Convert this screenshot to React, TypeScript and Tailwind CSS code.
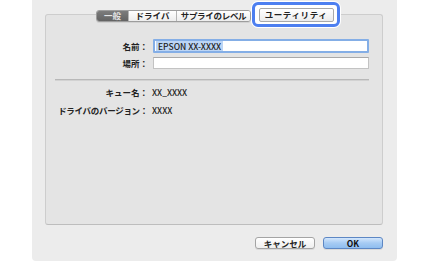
import React from 'react';

const font = { fontFamily: '"Noto Sans CJK JP", "Noto Sans", sans-serif' };

const App: React.FC = () => {
  return (
    <div className="w-[430px] h-[262px] bg-white overflow-hidden" style={font}>
      {/* ウィンドウ */}
      <div className="ml-[32px] w-[365px] h-[261px] bg-[#ececec] rounded-b-[4px] flex flex-col pt-[2px] pl-[13px] pr-[14px]">
        {/* タブ */}
        <div className="relative z-10 h-[25px] flex items-center pl-[51px] text-[8.5px] font-semibold leading-none">
          <div className="flex h-[12px] mt-[2px] rounded-[3px] border border-[#9d9d9d] overflow-hidden shadow-[0_1px_0_rgba(0,0,0,0.08)]">
            <div className="w-[31px] flex items-center justify-center bg-gradient-to-b from-[#7c7c7c] to-[#636363] text-[#e4e4e4]">一般</div>
            <div className="w-[48px] flex items-center justify-center bg-gradient-to-b from-white to-[#ededed] text-[#222] border-l border-[#b5b5b5]">ドライバ</div>
            <div className="w-[74px] flex items-center justify-center bg-gradient-to-b from-white to-[#ededed] text-[#222] border-l border-[#b5b5b5] tracking-[-0.3px]">サプライのレベル</div>
          </div>
          <div className="ml-[1px] w-[88px] h-[25px] rounded-[6px] border-[3px] border-[#4d7ff0] bg-white shadow-[0_0_0_1px_#ffffff] flex items-center justify-center">
            <div className="w-[75px] h-[14px] rounded-[2px] border border-[#a9a9a9] bg-gradient-to-b from-white to-[#ececec] flex items-center justify-center text-[#222] tracking-[0.6px]">
              ユーティリティ
            </div>
          </div>
        </div>

        {/* タブの中身 */}
        <div className="-mt-[13px] h-[211px] rounded-[3px] bg-[#e4e4e4] border border-[#cdcdcd] border-b-[#bdbdbd] pt-[24px] pl-[9px] pr-[13px] text-[8.5px] font-semibold text-[#222] leading-none">
          <div className="grid grid-cols-[93px_1fr] gap-x-[5px] items-center">
            <div className="text-right">名前：</div>
            <div className="h-[14px] border-2 border-[#84aee6] rounded-[1px] bg-white flex items-center px-[1px]">
              <span className="bg-[#bcd5f5] px-[2px] h-[10px] flex items-center font-medium">EPSON XX-XXXX</span>
            </div>
            <div className="text-right mt-[4px]">場所：</div>
            <div className="mt-[4px] h-[12px] border border-[#c3c3c3] border-t-[#a9a9a9] bg-white"></div>
          </div>

          <div className="mt-[10px] h-[2px] bg-[#b8b8b8] border-b border-[#d2d2d2]"></div>

          <div className="grid grid-cols-[93px_1fr] gap-x-[4px] mt-[7px] gap-y-[9px]">
            <div className="text-right">キュー名：</div>
            <div className="font-medium">XX_XXXX</div>
            <div className="text-right whitespace-nowrap tracking-[-0.3px]">ドライバのバージョン：</div>
            <div className="font-medium">XXXX</div>
          </div>
        </div>

        {/* ボタン */}
        <div className="flex justify-end gap-[8px] mt-[12px] text-[8.5px] font-semibold leading-none">
          <button className="w-[60px] h-[12px] rounded-[3px] border border-[#a4a4a4] bg-gradient-to-b from-white to-[#efefef] text-[#222] flex items-center justify-center shadow-[0_1px_0_rgba(0,0,0,0.08)]">
            キャンセル
          </button>
          <button className="w-[60px] h-[12px] rounded-[3px] border border-[#5d87c4] bg-gradient-to-b from-[#d3e6fc] via-[#a6cbf3] to-[#8fbdef] text-[#111] flex items-center justify-center shadow-[0_1px_0_rgba(0,0,0,0.08)]">
            OK
          </button>
        </div>
      </div>
    </div>
  );
};

export default App;
